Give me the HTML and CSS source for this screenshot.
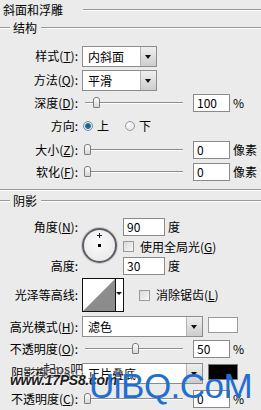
FILE: index.html
```html
<!DOCTYPE html>
<html lang="zh">
<head>
    <meta charset="UTF-8">
    <title>斜面和浮雕</title>
    <link rel="stylesheet" href="styles.css">
</head>
<body>

<div class="panel">
    <div class="title"><span>斜面和浮雕</span><i class="rule gap20"></i></div>

    <div class="group-head"><i class="rule short"></i><span>结构</span><i class="rule"></i></div>

    <div class="row h24">
        <label class="lbl">样式(<u>T</u>):</label>
        <div class="select w75"><span>内斜面</span><b class="btn"></b></div>
    </div>
    <div class="row h24">
        <label class="lbl">方法(<u>Q</u>):</label>
        <div class="select w75"><span>平滑</span><b class="btn"></b></div>
    </div>
    <div class="row h21">
        <label class="lbl">深度(<u>D</u>):</label>
        <div class="slider"><i class="thumb" style="left: 11px"></i></div>
        <div class="num">100</div><span class="unit">%</span>
    </div>
    <div class="row h26">
        <label class="lbl">方向:</label>
        <i class="radio on"></i><span class="opt">上</span>
        <i class="radio second"></i><span class="opt">下</span>
    </div>
    <div class="row h21">
        <label class="lbl">大小(<u>Z</u>):</label>
        <div class="slider"><i class="thumb" style="left: 2px"></i></div>
        <div class="num">0</div><span class="unit">像素</span>
    </div>
    <div class="row h23">
        <label class="lbl">软化(<u>F</u>):</label>
        <div class="slider"><i class="thumb" style="left: 2px"></i></div>
        <div class="num">0</div><span class="unit">像素</span>
    </div>

    <div class="separator"></div>

    <div class="group-head shade"><i class="rule short"></i><span>阴影</span><i class="rule"></i></div>

    <div class="light">
        <label class="lbl r1">角度(<u>N</u>):</label>
        <div class="dial"><i class="cross"></i><i class="dot"></i></div>
        <div class="cell r1"><div class="num wide">90</div><span class="unit">度</span></div>
        <div class="cell r2"><i class="check"></i><span>使用全局光(<u>G</u>)</span></div>
        <label class="lbl r3">高度:</label>
        <div class="cell r3"><div class="num wide">30</div><span class="unit">度</span></div>
    </div>

    <div class="row h38">
        <label class="lbl">光泽等高线:</label>
        <div class="contour">
            <svg width="32" height="32" viewBox="0 0 32 32">
                <rect x="0" y="0" width="32" height="32" fill="#fff"/>
                <polygon points="0,32 32,0 32,32" fill="#8c8c8c"/>
            </svg>
            <b class="btn small"></b>
        </div>
        <i class="check aa"></i><span>消除锯齿(<u>L</u>)</span>
    </div>
    <div class="row h25">
        <label class="lbl">高光模式(<u>H</u>):</label>
        <div class="select w121"><span>滤色</span><b class="btn"></b></div>
        <i class="swatch white top3"></i>
    </div>
    <div class="row h19">
        <label class="lbl">不透明度(<u>O</u>):</label>
        <div class="slider"><i class="thumb" style="left: 50px"></i></div>
        <div class="num">50</div><span class="unit">%</span>
    </div>
    <div class="row h30">
        <label class="lbl">阴影模式(<u>A</u>):</label>
        <div class="select w121"><span>正片叠底</span><b class="btn"></b></div>
        <i class="swatch black top6"></i>
    </div>
    <div class="row h22">
        <label class="lbl">不透明度(<u>C</u>):</label>
        <div class="slider"><i class="thumb" style="left: 2px"></i></div>
        <div class="num">0</div><span class="unit">%</span>
    </div>

    <!-- 水印 -->
    <div class="wm-cn">一起ps吧</div>
    <div class="wm-site">www.17PS8.com</div>
    <div class="wm-big">UiBQ.CoM</div>
</div>

</body>
</html>
```

FILE: styles.css
```css
body {
    margin: 0;
    background-color: #ebebeb;
    font-family: "Noto Sans CJK SC", "Liberation Sans", sans-serif;
    font-size: 12px;
    color: #000;
}
.panel {
    position: relative;
    width: 261px;
    height: 410px;
    overflow: hidden;
}
u {
    text-decoration: underline;
}

/* 标题和分组线 */
.title {
    display: flex;
    align-items: center;
    height: 19px;
    padding-left: 3px;
    line-height: 14px;
}
.rule {
    flex: 1;
    height: 0;
    border-top: 1px solid #9a9a9a;
    border-bottom: 1px solid #fdfdfd;
}
.rule.gap20 {
    margin-left: 20px;
}
.rule.short {
    flex: none;
    width: 10px;
}
.group-head {
    display: flex;
    align-items: center;
    height: 18px;
    margin-bottom: 7px;
    line-height: 14px;
}
.group-head span {
    margin: 0 4px 0 3px;
}
.group-head.shade {
    margin-top: 1px;
}
.separator {
    margin-top: 6px;
    border-top: 1px solid #9a9a9a;
    border-bottom: 1px solid #fdfdfd;
}

/* 行 */
.row {
    display: flex;
    align-items: center;
    line-height: 14px;
}
.h19 { height: 19px; }
.h21 { height: 21px; }
.h22 { height: 22px; }
.h23 { height: 23px; }
.h24 { height: 24px; }
.h25 { height: 25px; }
.h26 { height: 26px; }
.h30 { height: 30px; }
.h38 { height: 38px; }

.lbl {
    flex: none;
    width: 78px;
    margin-right: 4px;
    text-align: right;
    white-space: nowrap;
}

/* 下拉框 */
.select {
    display: flex;
    flex: none;
    height: 21px;
    box-sizing: border-box;
    border: 1px solid #8d8d8d;
    background-color: #fff;
}
.w75 { width: 75px; }
.w121 { width: 121px; }
.select span {
    flex: 1;
    padding-left: 5px;
    line-height: 19px;
}
.btn {
    position: relative;
    width: 15px;
    border-left: 1px solid #b3b3b3;
    background: linear-gradient(#efefef, #cdcdcd);
}
.btn::after {
    content: "";
    position: absolute;
    left: 4px;
    top: 8px;
    border-top: 4px solid #111;
    border-left: 3.5px solid transparent;
    border-right: 3.5px solid transparent;
}

/* 滑块 */
.slider {
    position: relative;
    flex: none;
    width: 108px;
    height: 14px;
}
.slider::before {
    content: "";
    position: absolute;
    left: 3px;
    right: 7px;
    top: 6px;
    border-top: 1px solid #8e8e8e;
    border-bottom: 1px solid #fff;
}
.thumb {
    position: absolute;
    top: 1px;
    width: 7px;
    height: 11px;
    box-sizing: border-box;
    border: 1px solid #7c7c7c;
    border-radius: 3px 3px 1px 1px;
    background: linear-gradient(#fff, #d6d6d6);
}

/* 数字输入 */
.num {
    flex: none;
    width: 37px;
    height: 18px;
    box-sizing: border-box;
    margin-left: 3px;
    padding-left: 3px;
    border: 1px solid #8a8a8a;
    background-color: #fff;
    line-height: 16px;
}
.num.wide {
    width: 42px;
    margin-left: 0;
}
.unit {
    margin-left: 3px;
}

/* 单选 */
.radio {
    flex: none;
    width: 10px;
    height: 10px;
    box-sizing: border-box;
    margin-left: 1px;
    border: 1px solid #9a9a9a;
    border-radius: 50%;
    background: radial-gradient(circle at 40% 35%, #fff, #dcdcdc);
}
.radio.on {
    border-color: #7d8a93;
    background: radial-gradient(circle, #0e4f74 0, #2b7ba6 2.5px, #e8ecef 3.5px);
}
.radio.second {
    margin-left: 16px;
}
.opt {
    margin-left: 4px;
}

/* 阴影部分 */
.light {
    display: grid;
    grid-template-columns: 78px 37px auto;
    grid-template-rows: 20px 19px 20px;
    column-gap: 4px;
    margin-top: 7px;
    line-height: 14px;
}
.light .lbl {
    grid-column: 1;
    margin-right: 0;
    align-self: center;
}
.cell {
    grid-column: 3;
    display: flex;
    align-items: center;
}
.r1 { grid-row: 1; }
.r2 { grid-row: 2; }
.r3 { grid-row: 3; }
.dial {
    position: relative;
    grid-column: 2;
    grid-row: 1 / span 3;
    align-self: start;
    width: 35px;
    height: 35px;
    box-sizing: border-box;
    margin-top: 11px;
    border: 2px solid #5a5f66;
    border-radius: 50%;
    background: radial-gradient(circle at 45% 40%, #fbfbfb, #e4e4e4);
    box-shadow: 0 0 0 1px #c9c9c9;
}
.cross {
    position: absolute;
    left: 13px;
    top: 3px;
    width: 5px;
    height: 5px;
}
.cross::before,
.cross::after {
    content: "";
    position: absolute;
    background-color: #222;
}
.cross::before {
    left: 2px;
    top: 0;
    width: 1px;
    height: 5px;
}
.cross::after {
    left: 0;
    top: 2px;
    width: 5px;
    height: 1px;
}
.dot {
    position: absolute;
    left: 14px;
    top: 14px;
    width: 3px;
    height: 3px;
    background-color: #000;
}
.check {
    flex: none;
    width: 11px;
    height: 11px;
    box-sizing: border-box;
    margin-right: 6px;
    border: 1px solid #9b9b9b;
    background: linear-gradient(135deg, #d9d9d9, #f7f7f7);
}
.check.aa {
    margin-left: 15px;
}

/* 等高线 */
.contour {
    display: flex;
    flex: none;
    height: 34px;
    box-sizing: border-box;
    border: 1px solid #111;
    background-color: #fff;
}
.contour svg {
    display: block;
}
.btn.small {
    width: 7px;
    border-left: 1px solid #111;
    background: #fff;
}
.btn.small::after {
    left: 0;
    top: 13px;
    border-top-width: 3px;
}

/* 颜色块 */
.swatch {
    flex: none;
    align-self: flex-start;
    width: 30px;
    height: 16px;
    box-sizing: border-box;
    margin-left: 5px;
    border: 1px solid #9a9a9a;
}
.swatch.white {
    background-color: #fff;
}
.swatch.black {
    background-color: #000;
    border-color: #777;
}
.top3 { margin-top: 3px; }
.top6 { margin-top: 6px; }

/* 水印 */
.wm-cn {
    position: absolute;
    left: 30px;
    top: 359px;
    font-size: 13px;
    color: #2a2a2a;
    text-shadow: 0 0 2px #fff, 0 0 2px #fff;
}
.wm-site {
    position: absolute;
    left: 10px;
    top: 372px;
    font-family: "Liberation Sans", sans-serif;
    font-size: 14px;
    font-weight: bold;
    font-style: italic;
    letter-spacing: -0.3px;
    color: #1b1b1b;
    text-shadow: 0 0 2px #fff, 0 0 2px #fff;
}
.wm-big {
    position: absolute;
    left: 89px;
    top: 366px;
    font-family: "Liberation Sans", sans-serif;
    font-size: 35px;
    line-height: 40px;
    letter-spacing: -0.5px;
    color: #1f6fd0;
}
```
